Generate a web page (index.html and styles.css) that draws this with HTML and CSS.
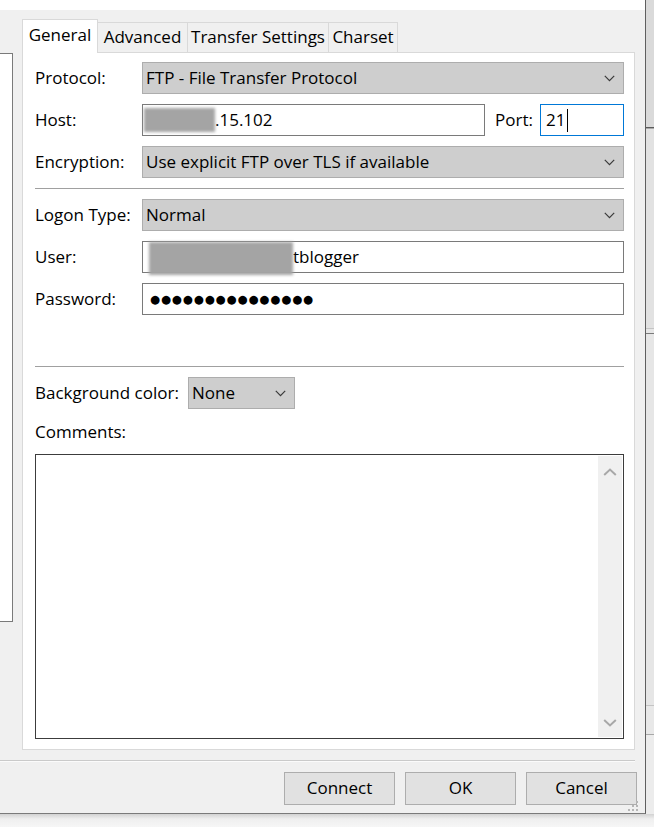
FILE: index.html
```html
<!DOCTYPE html>
<html>
<head>
<meta charset="utf-8">
<link rel="stylesheet" href="styles.css">
</head>
<body>
<div class="screen">
  <div class="top">
    <div class="dialog">
      <div class="titlebar"></div>
      <div class="main">
        <div class="tree"></div>
        <div class="tabctl">
          <div class="tabrow">
            <div class="tab active w-general">General</div>
            <div class="tab w-adv">Advanced</div>
            <div class="tab w-transfer">Transfer Settings</div>
            <div class="tab w-charset">Charset</div>
          </div>
          <div class="panel">
            <div class="form">
              <div class="lbl">Protocol:</div>
              <div class="ctl select"><span>FTP - File Transfer Protocol</span><svg class="chev" width="11" height="7" viewBox="0 0 11 7"><polyline points="0.8,0.8 5.5,5.6 10.2,0.8" fill="none" stroke="#3a3a3a" stroke-width="1.2"/></svg></div>

              <div class="lbl">Host:</div>
              <div class="hostrow">
                <div class="ctl input host"><span class="redact r-host"></span><span>.15.102</span></div>
                <div class="portlbl">Port:</div>
                <div class="ctl input port"><span>21</span><span class="caret"></span></div>
              </div>

              <div class="lbl">Encryption:</div>
              <div class="ctl select"><span>Use explicit FTP over TLS if available</span><svg class="chev" width="11" height="7" viewBox="0 0 11 7"><polyline points="0.8,0.8 5.5,5.6 10.2,0.8" fill="none" stroke="#3a3a3a" stroke-width="1.2"/></svg></div>

              <div class="sep"></div>

              <div class="lbl">Logon Type:</div>
              <div class="ctl select"><span>Normal</span><svg class="chev" width="11" height="7" viewBox="0 0 11 7"><polyline points="0.8,0.8 5.5,5.6 10.2,0.8" fill="none" stroke="#3a3a3a" stroke-width="1.2"/></svg></div>

              <div class="lbl">User:</div>
              <div class="ctl input"><span class="redact r-user"></span><span>tblogger</span></div>

              <div class="lbl">Password:</div>
              <div class="ctl input"><span class="dots">●●●●●●●●●●●●●●●</span></div>
            </div>

            <div class="sep2"></div>

            <div class="bgrow">
              <div class="bglbl">Background color:</div>
              <div class="ctl select small"><span>None</span><svg class="chev" width="11" height="7" viewBox="0 0 11 7"><polyline points="0.8,0.8 5.5,5.6 10.2,0.8" fill="none" stroke="#3a3a3a" stroke-width="1.2"/></svg></div>
            </div>

            <div class="comlbl">Comments:</div>
            <div class="comments">
              <div class="sb">
                <svg width="14" height="8" viewBox="0 0 14 8"><polyline points="1.2,7 7,1.6 12.8,7" fill="none" stroke="#a8a8a8" stroke-width="2"/></svg>
                <svg width="14" height="8" viewBox="0 0 14 8"><polyline points="1.2,1 7,6.4 12.8,1" fill="none" stroke="#a8a8a8" stroke-width="2"/></svg>
              </div>
            </div>
          </div>
        </div>
      </div>
      <div class="footer">
        <div class="fsep"></div>
        <div class="buttons">
          <button class="btn">Connect</button>
          <button class="btn">OK</button>
          <button class="btn">Cancel</button>
        </div>
        <svg class="grip" width="12" height="12" viewBox="0 0 12 12">
          <rect x="9" y="1" width="2" height="2" fill="#b5b5b5"/>
          <rect x="5" y="5" width="2" height="2" fill="#b5b5b5"/>
          <rect x="9" y="5" width="2" height="2" fill="#b5b5b5"/>
          <rect x="1" y="9" width="2" height="2" fill="#b5b5b5"/>
          <rect x="5" y="9" width="2" height="2" fill="#b5b5b5"/>
          <rect x="9" y="9" width="2" height="2" fill="#b5b5b5"/>
        </svg>
      </div>
    </div>
    <div class="beyond">
      <div class="bz z1"></div>
      <div class="bl l-dark"></div>
      <div class="bl l-mid"></div>
      <div class="bz z2"></div>
      <div class="bl l-light"></div>
      <div class="bz z3"></div>
      <div class="bl l-dark2"></div>
      <div class="bz z4"></div>
      <div class="bl l-light"></div>
      <div class="bz z5"></div>
      <div class="bl l-mid"></div>
      <div class="bz z6"></div>
    </div>
  </div>
  <div class="below"></div>
</div>
</body>
</html>
```

FILE: styles.css
```css
* { box-sizing: border-box; }
html, body { margin: 0; padding: 0; }
body {
  font-family: "Open Sans", "Noto Sans", sans-serif;
  font-size: 17px;
  line-height: 1.3;
  color: #000;
  background: #f3f3f3;
}
.screen { width: 654px; height: 827px; overflow: hidden; display: flex; flex-direction: column; }
.top { display: flex; height: 814px; flex: none; }
.dialog {
  width: 646px; height: 814px; flex: none;
  border-right: 1px solid #5f5f5f;
  border-bottom: 1px solid #7a7a7a;
  background: #f0f0f0;
  display: flex; flex-direction: column;
  position: relative;
}
.titlebar { height: 10px; background: #fff; flex: none; }
.main { display: flex; height: 740px; flex: none; }
.tree {
  width: 13px; height: 569px; margin-top: 43px; flex: none;
  background: #fff;
  border: 1px solid #7a7a7a; border-left: none;
}
.tabctl { margin-left: 9px; width: 613px; padding-top: 9px; display: flex; flex-direction: column; flex: none; }
.tabrow { display: flex; align-items: flex-end; height: 33px; position: relative; z-index: 1; }
.tab {
  height: 30px;
  display: flex; align-items: center; justify-content: center;
  background: #f0f0f0;
  border: 1px solid #d9d9d9; border-bottom: none;
  margin-left: -1px;
  white-space: nowrap;
}
.tab.active { height: 34px; margin-bottom: -1px; margin-left: 0; background: #fff; position: relative; z-index: 2; padding-bottom: 2px; }
.w-general { width: 76px; }
.w-adv { width: 91px; }
.w-transfer { width: 142px; }
.w-charset { width: 70px; }

.panel {
  height: 698px;
  background: #fff;
  border: 1px solid #d9d9d9;
  padding: 9px 10px 0 12px;
}
.form { display: grid; grid-template-columns: 107px 1fr; row-gap: 10px; align-items: center; }
.lbl { white-space: nowrap; }
.ctl { height: 32px; display: flex; align-items: center; white-space: nowrap; }
.select {
  background: #cecece;
  border: 1px solid #adadad;
  padding: 0 8px 0 3px;
  justify-content: space-between;
}
.input { background: #fff; border: 1px solid #7a7a7a; padding: 0 3px; }
.sep { grid-column: 1 / -1; height: 1px; background: #a0a0a0; }

.hostrow { display: flex; align-items: center; }
.host { width: 343px; flex: none; }
.portlbl { margin-left: 10px; }
.port { width: 84px; margin-left: auto; border-color: #0078d7; padding-left: 5px; }
.caret { display: inline-block; width: 1px; height: 23px; background: #000; margin-left: 2px; }

.redact { display: inline-block; background: #a4a4a4; filter: blur(1.6px); flex: none; }
.r-host { width: 71px; height: 24px; margin-left: -2px; }
.r-user { width: 144px; height: 33px; margin-left: 3px; margin-top: 2px; }

.dots { font-family: "DejaVu Sans", sans-serif; font-size: 11.5px; letter-spacing: 0.9px; margin-left: 4px; }

.sep2 { margin-top: 51px; height: 1px; background: #a0a0a0; }
.bgrow { display: flex; align-items: center; margin-top: 10px; }
.bglbl { width: 153px; white-space: nowrap; }
.select.small { width: 107px; }
.comlbl { margin-top: 11px; line-height: 24px; }
.comments {
  margin-top: 10px;
  height: 285px;
  width: 589px;
  border: 1px solid #3c3c3c;
  background: #fff;
  display: flex; justify-content: flex-end;
  padding: 1px 1px 1px 0;
}
.sb {
  width: 24px; background: #f0f0f0;
  display: flex; flex-direction: column; align-items: center; justify-content: space-between;
  padding: 12px 0 10px;
}

.footer { flex: 1; position: relative; }
.fsep { margin-top: 10px; margin-right: 10px; border-top: 1px solid #cacaca; border-bottom: 1px solid #fbfbfb; }
.buttons { display: flex; justify-content: flex-end; gap: 10px; padding-right: 8px; margin-top: 10px; }
.btn {
  width: 111px; height: 33px;
  background: #e1e1e1;
  border: 1px solid #adadad;
  font: inherit; color: #000;
  padding: 0;
}
.grip { position: absolute; right: 6px; bottom: 1px; }

.beyond { flex: 1; display: flex; flex-direction: column; background: #e4e4e4; }
.bz { flex: none; }
.z1 { height: 127px; background: #dadada; }
.z2 { height: 199px; background: #e2e2e2; }
.z3 { height: 4px; background: #e6e6e6; }
.z4 { height: 371px; background: #e6e6e6; }
.z5 { height: 28px; background: #e8e8e8; }
.z6 { flex: 1; background: #ececec; }
.bl { height: 1px; flex: none; }
.l-dark { background: #5a5a5a; }
.l-dark2 { background: #7a7a7a; }
.l-mid { background: #a8a8a8; }
.l-light { background: #c4c4c4; }

.below { height: 13px; flex: none; background: linear-gradient(#d2d2d2, #efefef 5px, #f6f6f6); }
```
